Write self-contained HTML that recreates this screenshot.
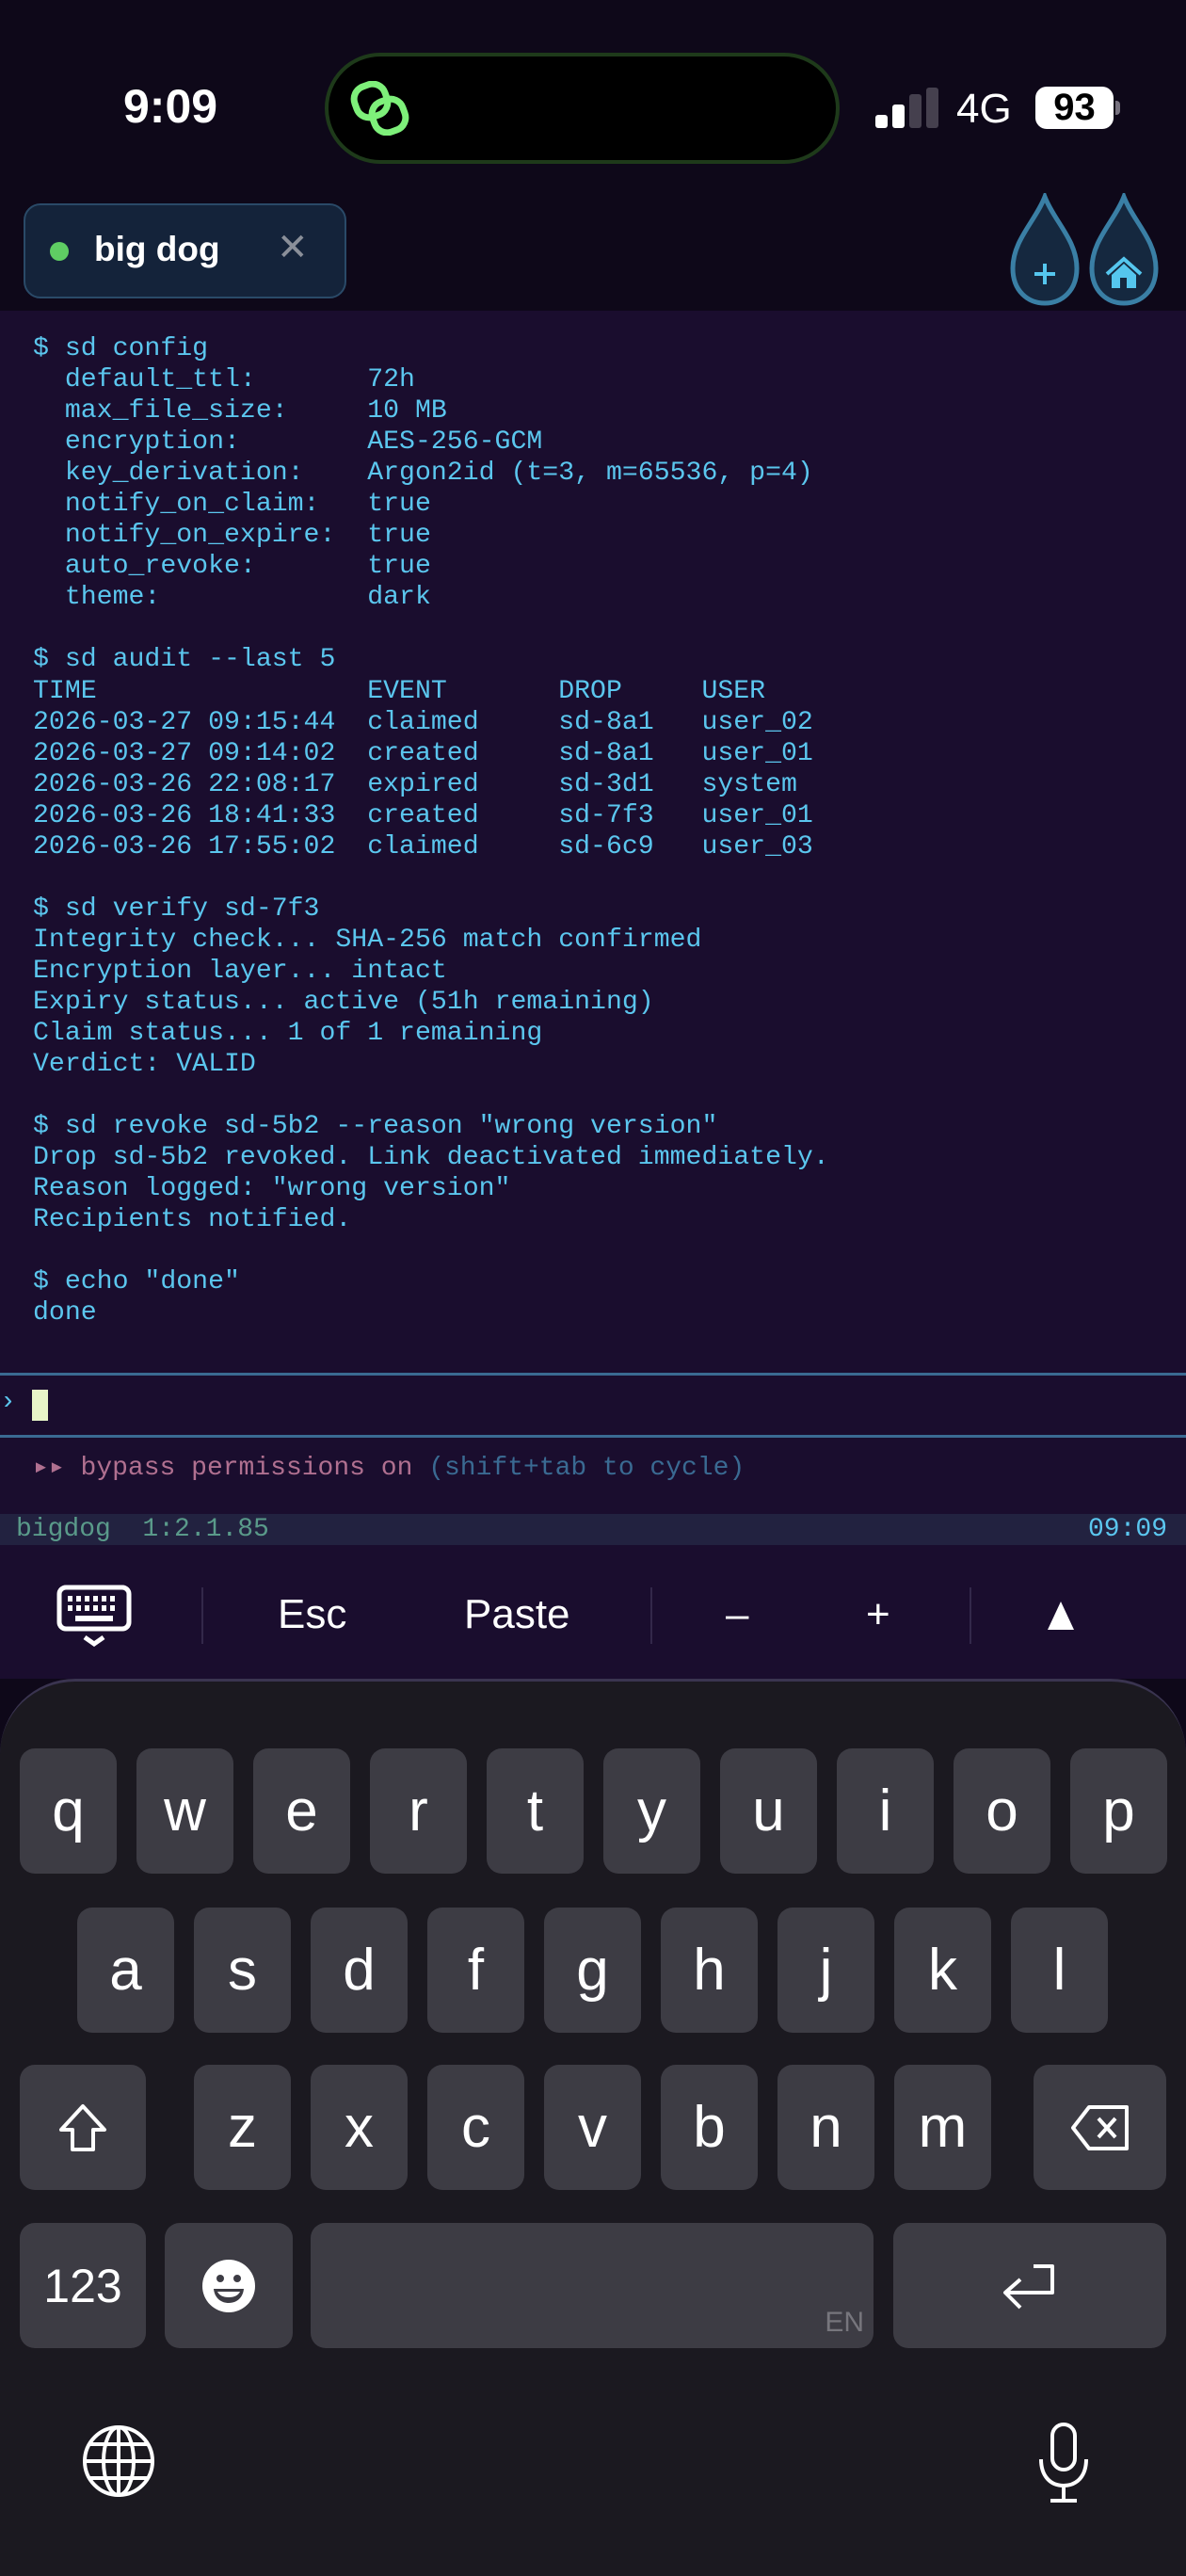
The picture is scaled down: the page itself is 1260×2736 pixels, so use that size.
<!DOCTYPE html>
<html><head><meta charset="utf-8"><style>
*{margin:0;padding:0;box-sizing:border-box}
body{width:1260px;height:2736px;background:#0e0819;position:relative;overflow:hidden;font-family:"Liberation Sans",sans-serif}
.abs{position:absolute}
#term{position:absolute;left:0;top:330px;width:1260px;height:1278px;background:#1a0d2e}
pre{position:absolute;left:35px;top:354px;font-family:"Liberation Mono","DejaVu Sans Mono",monospace;font-size:28.2px;line-height:33.05px;color:#5bc6ee;letter-spacing:0}
.hl{position:absolute;left:0;width:1260px;height:3px;background:#3a6a92}
.key{position:absolute;background:#3d3c44;border-radius:16px;color:#fff;font-size:62px;display:flex;align-items:center;justify-content:center;height:133px}
.tb{position:absolute;color:#fff;font-size:44px;top:1690px}
.sep{position:absolute;top:1686px;width:2px;height:60px;background:#33284a}
</style></head><body>
<div class="abs" style="left:131px;top:84px;color:#fff;font-size:50px;font-weight:bold">9:09</div>
<div class="abs" style="left:345px;top:56px;width:547px;height:118px;background:#000;border:4px solid #1e3a1a;border-radius:59px"></div>
<svg class="abs" style="left:372px;top:86px" width="72" height="58" viewBox="0 0 72 58"><g fill="none" stroke="#7ef07a" stroke-width="7"><rect x="5" y="4" width="34" height="34" rx="14" transform="rotate(-20 22 21)"/><rect x="24" y="20" width="34" height="34" rx="14" transform="rotate(-20 41 37)"/></g></svg>
<div class="abs" style="left:930px;top:122px;width:13px;height:14px;background:#fff;border-radius:3px"></div>
<div class="abs" style="left:948px;top:111px;width:13px;height:25px;background:#fff;border-radius:3px"></div>
<div class="abs" style="left:966px;top:100px;width:13px;height:36px;background:#45404e;border-radius:3px"></div>
<div class="abs" style="left:984px;top:93px;width:13px;height:43px;background:#45404e;border-radius:3px"></div>
<div class="abs" style="left:1016px;top:91px;color:#fff;font-size:44px">4G</div>
<div class="abs" style="left:1100px;top:92px;width:83px;height:45px;background:#fff;border-radius:12px;color:#000;font-weight:bold;font-size:40px;text-align:center;line-height:45px">93</div>
<div class="abs" style="left:1185px;top:107px;width:5px;height:15px;background:#77727f;border-radius:0 4px 4px 0"></div>
<div class="abs" style="left:25px;top:216px;width:343px;height:101px;background:#14233a;border:2px solid #2a4a68;border-radius:18px"></div>
<div class="abs" style="left:53px;top:257px;width:20px;height:20px;border-radius:50%;background:#5fcd63"></div>
<div class="abs" style="left:100px;top:244px;color:#fff;font-size:37px;font-weight:bold">big dog</div>
<div class="abs" style="left:294px;top:240px;color:#8a8f99;font-size:40px">✕</div>
<svg class="abs" style="left:1068px;top:205px" width="172" height="122" viewBox="0 0 172 122">
<g fill="#15283f" stroke="#3a7fa5" stroke-width="5">
<path d="M42 4 C52 30 76 50 76 80 C76 104 60 117 42 117 C24 117 8 104 8 80 C8 50 32 30 42 4Z"/>
<path d="M126 4 C136 30 160 50 160 80 C160 104 144 117 126 117 C108 117 92 104 92 80 C92 50 116 30 126 4Z"/>
</g>
<path d="M31 86 H53 M42 75 V97" stroke="#55c6ee" stroke-width="4"/>
<path d="M113 87 L126 75 L139 87 V101 H113Z" fill="#55c6ee"/><path d="M108 86 L126 70 L144 86" stroke="#55c6ee" stroke-width="4" fill="none"/><rect x="122" y="90" width="7" height="11" fill="#15283f"/>
</svg>
<div id="term"></div>
<pre>$ sd config
  default_ttl:       72h
  max_file_size:     10 MB
  encryption:        AES-256-GCM
  key_derivation:    Argon2id (t=3, m=65536, p=4)
  notify_on_claim:   true
  notify_on_expire:  true
  auto_revoke:       true
  theme:             dark

$ sd audit --last 5
TIME                 EVENT       DROP     USER
2026-03-27 09:15:44  claimed     sd-8a1   user_02
2026-03-27 09:14:02  created     sd-8a1   user_01
2026-03-26 22:08:17  expired     sd-3d1   system
2026-03-26 18:41:33  created     sd-7f3   user_01
2026-03-26 17:55:02  claimed     sd-6c9   user_03

$ sd verify sd-7f3
Integrity check... SHA-256 match confirmed
Encryption layer... intact
Expiry status... active (51h remaining)
Claim status... 1 of 1 remaining
Verdict: VALID

$ sd revoke sd-5b2 --reason "wrong version"
Drop sd-5b2 revoked. Link deactivated immediately.
Reason logged: "wrong version"
Recipients notified.

$ echo "done"
done</pre>
<div class="hl" style="top:1458px"></div>
<div class="hl" style="top:1524px"></div>
<div class="abs" style="left:0px;top:1474px;color:#5bc6ee;font-family:'Liberation Mono',monospace;font-size:28px">›</div>
<div class="abs" style="left:34px;top:1476px;width:17px;height:33px;background:#e8f5c8"></div>
<div class="abs" style="left:35px;top:1540px;font-family:'Liberation Mono',monospace;font-size:28px;color:#b07090;white-space:pre">▸▸ bypass permissions on <span style="color:#3a6a92">(shift+tab to cycle)</span></div>
<div class="abs" style="left:0;top:1608px;width:1260px;height:33px;background:#222240"></div>
<div class="abs" style="left:17px;top:1608px;font-family:'Liberation Mono',monospace;font-size:28px;line-height:33px;color:#5a9a8a;white-space:pre">bigdog  1:2.1.85</div>
<div class="abs" style="left:1156px;top:1608px;font-family:'Liberation Mono',monospace;font-size:28px;line-height:33px;color:#5bc6ee">09:09</div>
<div class="abs" style="left:0;top:1641px;width:1260px;height:142px;background:#1a0d2e"></div>
<svg class="abs" style="left:60px;top:1683px" width="80" height="68" viewBox="0 0 80 68"><rect x="3" y="3" width="74" height="44" rx="7" fill="none" stroke="#fff" stroke-width="5"/><g fill="#fff"><rect x="12" y="12" width="5" height="6"/><rect x="21" y="12" width="5" height="6"/><rect x="30" y="12" width="5" height="6"/><rect x="39" y="12" width="5" height="6"/><rect x="48" y="12" width="5" height="6"/><rect x="57" y="12" width="5" height="6"/><rect x="12" y="22" width="5" height="6"/><rect x="21" y="22" width="5" height="6"/><rect x="30" y="22" width="5" height="6"/><rect x="39" y="22" width="5" height="6"/><rect x="48" y="22" width="5" height="6"/><rect x="57" y="22" width="5" height="6"/><rect x="20" y="33" width="40" height="6"/></g><path d="M30 56 L40 63 L50 56" fill="none" stroke="#fff" stroke-width="5"/></svg>
<div class="sep" style="left:214px"></div><div class="sep" style="left:691px"></div><div class="sep" style="left:1030px"></div>
<div class="tb" style="left:295px">Esc</div>
<div class="tb" style="left:493px">Paste</div>
<div class="tb" style="left:771px">–</div>
<div class="tb" style="left:920px">+</div>
<svg class="abs" style="left:1112px;top:1700px" width="30" height="32"><path d="M15 1 L29 31 H1Z" fill="#fff"/></svg>
<div class="abs" style="left:0;top:1783px;width:1260px;height:953px;background:#1b1920;border-radius:80px 80px 0 0;border-top:3px solid #3a3450"></div>
<div class="key" style="left:21px;top:1857px;width:103px">q</div>
<div class="key" style="left:145px;top:1857px;width:103px">w</div>
<div class="key" style="left:269px;top:1857px;width:103px">e</div>
<div class="key" style="left:393px;top:1857px;width:103px">r</div>
<div class="key" style="left:517px;top:1857px;width:103px">t</div>
<div class="key" style="left:641px;top:1857px;width:103px">y</div>
<div class="key" style="left:765px;top:1857px;width:103px">u</div>
<div class="key" style="left:889px;top:1857px;width:103px">i</div>
<div class="key" style="left:1013px;top:1857px;width:103px">o</div>
<div class="key" style="left:1137px;top:1857px;width:103px">p</div>
<div class="key" style="left:82px;top:2026px;width:103px">a</div>
<div class="key" style="left:206px;top:2026px;width:103px">s</div>
<div class="key" style="left:330px;top:2026px;width:103px">d</div>
<div class="key" style="left:454px;top:2026px;width:103px">f</div>
<div class="key" style="left:578px;top:2026px;width:103px">g</div>
<div class="key" style="left:702px;top:2026px;width:103px">h</div>
<div class="key" style="left:826px;top:2026px;width:103px">j</div>
<div class="key" style="left:950px;top:2026px;width:103px">k</div>
<div class="key" style="left:1074px;top:2026px;width:103px">l</div>
<div class="key" style="left:21px;top:2193px;width:134px"><svg width="54" height="54" viewBox="0 0 54 54"><path d="M27 4 L50 29 H38 V50 H16 V29 H4Z" fill="none" stroke="#fff" stroke-width="4" stroke-linejoin="round"/></svg></div>
<div class="key" style="left:206px;top:2193px;width:103px">z</div>
<div class="key" style="left:330px;top:2193px;width:103px">x</div>
<div class="key" style="left:454px;top:2193px;width:103px">c</div>
<div class="key" style="left:578px;top:2193px;width:103px">v</div>
<div class="key" style="left:702px;top:2193px;width:103px">b</div>
<div class="key" style="left:826px;top:2193px;width:103px">n</div>
<div class="key" style="left:950px;top:2193px;width:103px">m</div>
<div class="key" style="left:1098px;top:2193px;width:141px"><svg width="64" height="50" viewBox="0 0 64 50"><path d="M20 3 H60 V47 H20 L3 25Z" fill="none" stroke="#fff" stroke-width="4" stroke-linejoin="round"/><path d="M30 15 L48 35 M48 15 L30 35" stroke="#fff" stroke-width="4"/></svg></div>
<div class="key" style="left:21px;top:2361px;width:134px;font-size:50px">123</div>
<div class="key" style="left:175px;top:2361px;width:136px"><svg width="58" height="58" viewBox="0 0 58 58"><circle cx="29" cy="29" r="28" fill="#fff"/><circle cx="20" cy="21" r="4" fill="#3d3c44"/><circle cx="38" cy="21" r="4" fill="#3d3c44"/><path d="M13 32 H45 C44 42 37 47 29 47 C21 47 14 42 13 32Z" fill="#3d3c44"/><path d="M17 35 H41 C39 39 35 41 29 41 C23 41 19 39 17 35Z" fill="#fff"/></svg></div>
<div class="key" style="left:330px;top:2361px;width:598px"><span style="position:absolute;right:10px;bottom:10px;font-size:30px;color:#77767d">EN</span></div>
<div class="key" style="left:949px;top:2361px;width:290px"><svg width="64" height="54" viewBox="0 0 64 54"><path d="M36 6 H56 V34 H8 M22 20 L6 34 L22 50" fill="none" stroke="#fff" stroke-width="4" stroke-linejoin="round"/></svg></div>
<svg class="abs" style="left:86px;top:2574px" width="80" height="80" viewBox="0 0 80 80"><g fill="none" stroke="#fff" stroke-width="4"><circle cx="40" cy="40" r="36"/><ellipse cx="40" cy="40" rx="16" ry="36"/><path d="M40 4 V76 M4 40 H76 M10 22 H70 M10 58 H70"/></g></svg>
<svg class="abs" style="left:1100px;top:2572px" width="60" height="88" viewBox="0 0 60 88"><g fill="none" stroke="#fff" stroke-width="4"><rect x="18" y="3" width="24" height="48" rx="12"/><path d="M6 40 C6 58 16 68 30 68 C44 68 54 58 54 40 M30 68 V84 M16 84 H44"/></g></svg>
</body></html>
